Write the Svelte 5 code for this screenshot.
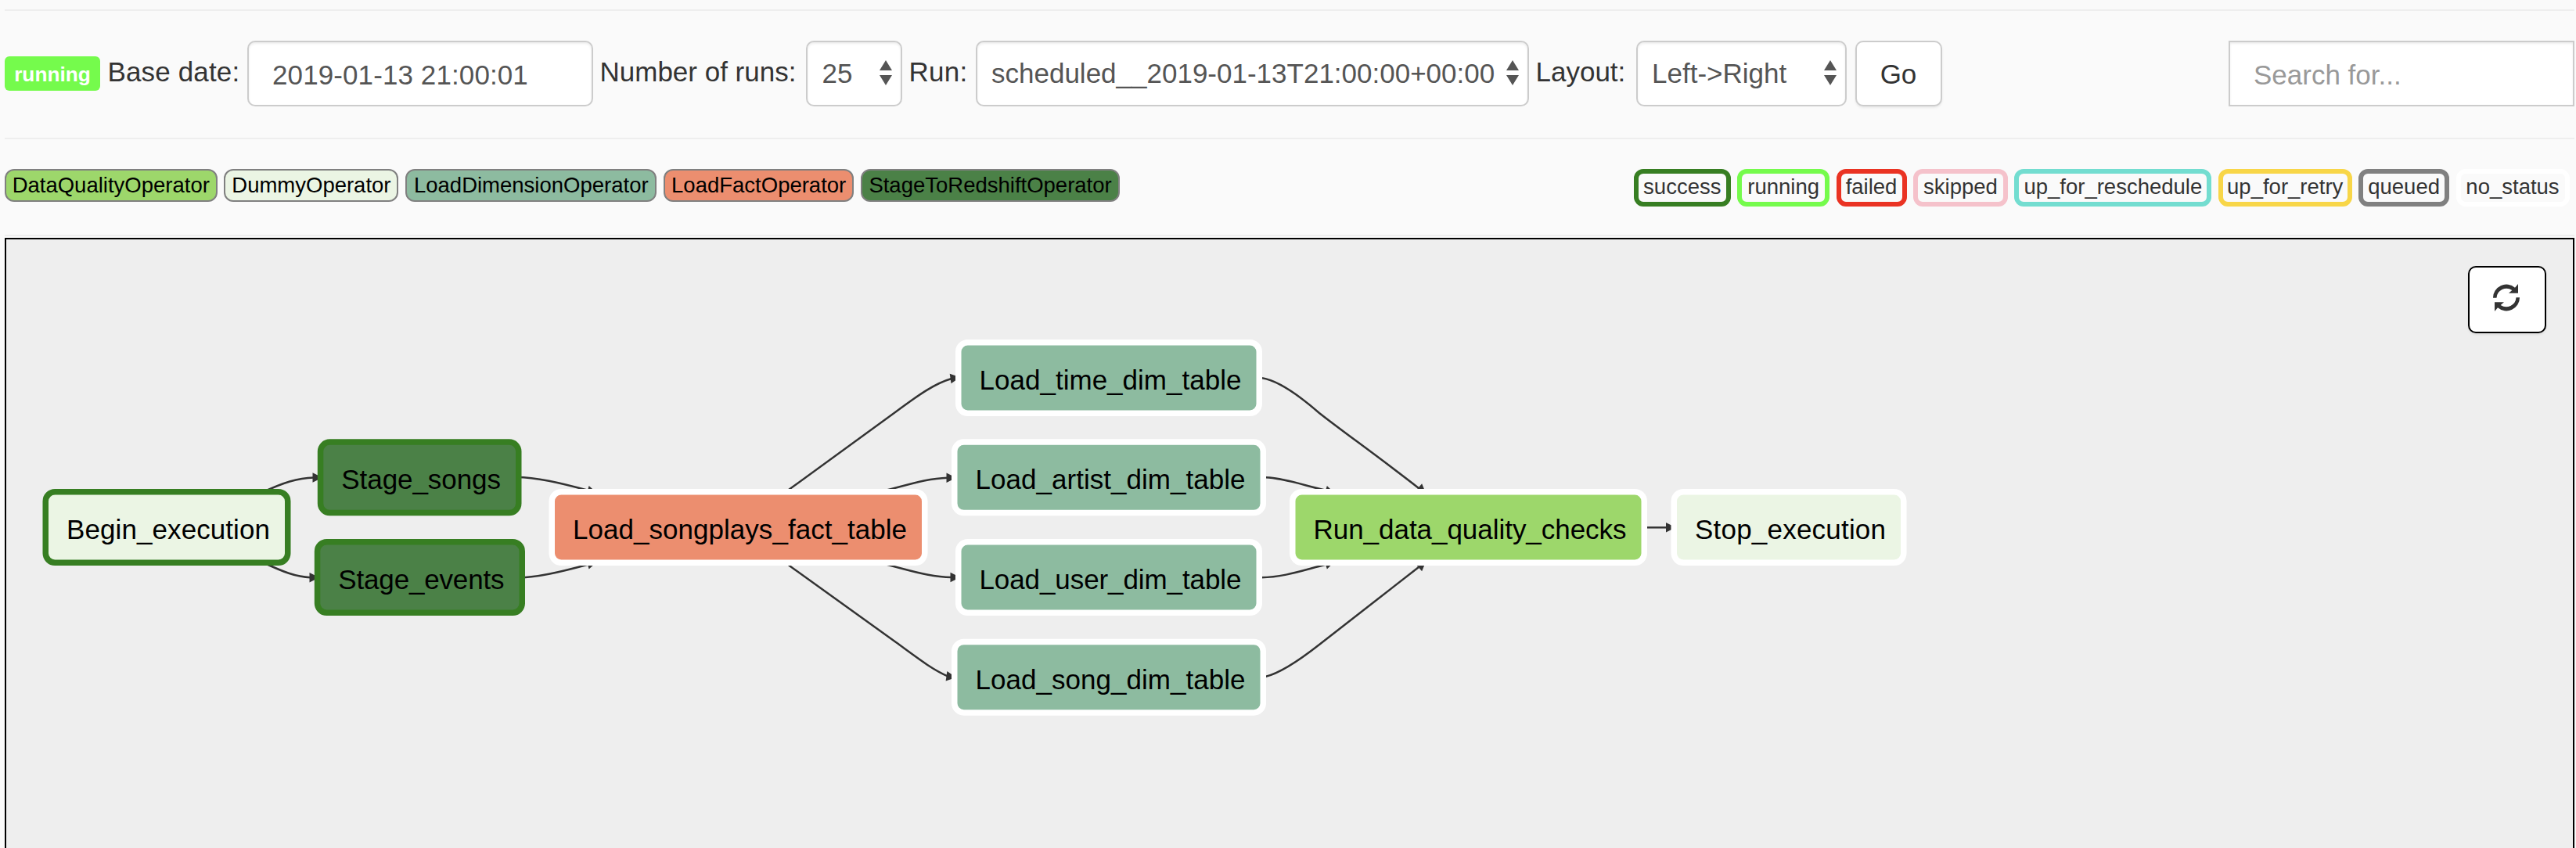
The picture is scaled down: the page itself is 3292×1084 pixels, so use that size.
<script>
  const operators = [
    { name: 'DataQualityOperator', cls: 'quality', w: 271.5 },
    { name: 'DummyOperator', cls: 'dummy', w: 223 },
    { name: 'LoadDimensionOperator', cls: 'dimension', w: 321 },
    { name: 'LoadFactOperator', cls: 'fact', w: 243 },
    { name: 'StageToRedshiftOperator', cls: 'stage', w: 331 },
  ];
  const states = [
    { name: 'success', w: 124 },
    { name: 'running', w: 118 },
    { name: 'failed', w: 90 },
    { name: 'skipped', w: 121 },
    { name: 'up_for_reschedule', w: 252 },
    { name: 'up_for_retry', w: 171 },
    { name: 'queued', w: 116 },
    { name: 'no_status', w: 145 },
  ];
  // Outer left/right edges and top of each task box; every box is 98 high.
  const nodes = [
    { id: 'Begin_execution', x1: 54.5, x2: 371.5, y: 625, op: 'dummy', state: 'success' },
    { id: 'Stage_songs', x1: 405.8, x2: 666.5, y: 561.3, op: 'stage', state: 'success' },
    { id: 'Stage_events', x1: 401.8, x2: 671, y: 689, op: 'stage', state: 'success' },
    { id: 'Load_songplays_fact_table', x1: 701.5, x2: 1185.5, y: 625, op: 'fact', state: 'none' },
    { id: 'Load_time_dim_table', x1: 1221, x2: 1613, y: 434, op: 'dimension', state: 'none' },
    { id: 'Load_artist_dim_table', x1: 1216, x2: 1618, y: 561.3, op: 'dimension', state: 'none' },
    { id: 'Load_user_dim_table', x1: 1221, x2: 1613, y: 689, op: 'dimension', state: 'none' },
    { id: 'Load_song_dim_table', x1: 1216, x2: 1618, y: 816.7, op: 'dimension', state: 'none' },
    { id: 'Run_data_quality_checks', x1: 1648, x2: 2105, y: 625, op: 'quality', state: 'none' },
    { id: 'Stop_execution', x1: 2135.5, x2: 2436.5, y: 625, op: 'dummy', state: 'none' },
  ];
  // Each edge: curve, then arrowhead base centre and angle.
  const edges = [
    { d: 'M335 629.5C362 617 380 611 401 610.5', x: 399.5, y: 610.5, a: 0 },
    { d: 'M335 718.5C362 731 378 737.5 397 738.2', x: 395.5, y: 738.2, a: 0 },
    { d: 'M660 610C685 610 715 617 752 627', x: 751, y: 627, a: 15 },
    { d: 'M660 738.5C685 738.5 715 731.5 752 721.5', x: 751, y: 721.5, a: -15 },
    { d: 'M1008 626L1144 527C1175 504 1195 490 1216 484', x: 1214.6, y: 484, a: -8 },
    { d: 'M1128 628C1160 620 1184 611.5 1211 610.7', x: 1209.5, y: 610.7, a: 0 },
    { d: 'M1128 720.5C1160 728 1188 738 1216 738', x: 1214.5, y: 738, a: 0 },
    { d: 'M1008 722.5L1145 821C1178 845 1192 856 1211 864.3', x: 1209.5, y: 864.3, a: 8 },
    { d: 'M1613 483.3C1630 486 1655 501 1686 528C1715 551 1762 584 1813 624', x: 1813, y: 623, a: 41 },
    { d: 'M1617 610.3C1640 611 1665 620 1695 627', x: 1694, y: 627, a: 17 },
    { d: 'M1612 738.2C1640 738 1665 729 1695 721.5', x: 1694, y: 721.5, a: -17 },
    { d: 'M1617 865C1634 861 1658 846 1686 824C1715 801 1762 765 1813 725', x: 1813, y: 725.5, a: -41 },
    { d: 'M2104 674.3H2131', x: 2129, y: 674.3, a: 0 },
  ];
  const arrow = 'M0 53A51 51 0 0 1 84 14L96 0V35H60L73 24A38 38 0 0 0 13.500 53Z';
</script>

{#snippet sorter()}
  <svg class="sorter" viewBox="0 0 16 32"><path d="M8 0L16 13H0ZM0 19H16L8 32Z" /></svg>
{/snippet}

<main>
  <form class="controls">
    <span class="badge">running</span>
    <label class="base">Base date:</label>
    <div class="field date">2019-01-13 21:00:01</div>
    <label class="count">Number of runs:</label>
    <div class="field select runs"><span>25</span>{@render sorter()}</div>
    <label class="run">Run:</label>
    <div class="field select run-id"><span>scheduled__2019-01-13T21:00:00+00:00</span>{@render sorter()}</div>
    <label class="layout">Layout:</label>
    <div class="field select direction"><span>Left-&gt;Right</span>{@render sorter()}</div>
    <button class="go" type="button">Go</button>
    <div class="field search">Search for...</div>
  </form>

  <section class="legend">
    <div class="operators">
      {#each operators as op}
        <span class="op {op.cls}" style:width="{op.w}px">{op.name}</span>
      {/each}
    </div>
    <div class="states">
      {#each states as state}
        <span class="state {state.name}" style:width="{state.w}px">{state.name}</span>
      {/each}
    </div>
  </section>

  <section class="graph">
    <svg class="dag" viewBox="8 306 3280 778">
      {#each edges as edge}
        <path class="edge" d={edge.d} />
        <path class="head" d="M0 -6.3L12.5 0L0 6.3Z" transform="translate({edge.x} {edge.y}) rotate({edge.a})" />
      {/each}
      {#each nodes as node}
        <rect
          class="node {node.op} {node.state}"
          x={node.x1 + 3.75}
          y={node.y + 3.75}
          width={node.x2 - node.x1 - 7.5}
          height="90.5"
          rx="12"
        />
        <text
          x={node.x1 + 30.5}
          y={node.y + 64}
          textLength={node.x2 - node.x1 - 57}>{node.id}</text>
      {/each}
    </svg>
    <button class="refresh" type="button" aria-label="Refresh">
      <svg viewBox="0 0 102 105">
        <path d={arrow} />
        <path d={arrow} transform="rotate(180 51 52.5)" />
      </svg>
    </button>
  </section>
</main>

<style>
  :global(body) {
    margin: 0;
    background: #fafafa;
  }
  main {
    box-sizing: border-box;
    width: 3292px;
    height: 1084px;
    padding: 12px 2px 0 6px;
    overflow: hidden;
    display: flex;
    flex-direction: column;
    font: 35px/50px 'Liberation Sans', Arial, sans-serif;
    color: #333;
    white-space: nowrap;
  }
  .controls {
    box-sizing: border-box;
    height: 164px;
    border-top: 2px solid #eee;
    padding-top: 38px;
    display: flex;
    align-items: flex-start;
  }
  .badge {
    box-sizing: border-box;
    width: 122px;
    height: 44px;
    margin-top: 20px;
    border-radius: 6px;
    background: #75fb4c;
    color: #fff;
    font-size: 26.25px;
    font-weight: bold;
    line-height: 46px;
    text-align: center;
  }
  label {
    box-sizing: border-box;
    padding-top: 15px;
  }
  .base { width: 188px; padding-left: 9.5px; letter-spacing: 0.15px; }
  .count { width: 272px; padding-left: 8.5px; }
  .run { width: 93.5px; padding-left: 8.5px; letter-spacing: 0.3px; }
  .layout { width: 137px; padding-left: 9px; }
  .field {
    box-sizing: border-box;
    height: 84px;
    padding: 17px 0 0 30px;
    border: 2px solid #ccc;
    border-radius: 10px;
    background: #fff;
    box-shadow: inset 0 2px 3px rgba(0, 0, 0, 0.075);
    color: #555;
  }
  .date { width: 442px; letter-spacing: 0.1px; }
  .select {
    display: flex;
    justify-content: space-between;
    padding: 15px 11px 0 18.5px;
  }
  .runs { width: 123px; }
  .run-id { width: 707px; }
  .direction { width: 269px; }
  .sorter {
    width: 16px;
    height: 32px;
    margin-top: 8px;
    fill: #555;
  }
  .go {
    box-sizing: border-box;
    width: 111px;
    height: 84px;
    margin-left: 11px;
    padding: 2px 0 0;
    border: 2px solid #ccc;
    border-radius: 10px;
    background: #fff;
    box-shadow: 0 2px 3px rgba(0, 0, 0, 0.07);
    color: #333;
    font: inherit;
  }
  .search {
    width: 442px;
    margin-left: auto;
    border-radius: 0;
    color: #999;
  }
  .legend {
    box-sizing: border-box;
    height: 126px;
    padding: 38px 0 0;
    border-top: 2px solid #eee;
    border-bottom: 2px solid #eee;
    display: flex;
    justify-content: space-between;
    align-items: flex-start;
    font-size: 27.5px;
  }
  .operators { display: flex; gap: 8.9px; }
  .op {
    box-sizing: border-box;
    height: 42px;
    border: 2px solid #808080;
    border-radius: 12px;
    color: #000;
    line-height: 37px;
    text-align: center;
  }
  .op.quality { background: #9dd76b; }
  .op.dummy { background: #ebf5e4; }
  .op.dimension { background: #8dbba0; }
  .op.fact { background: #ec8e6f; }
  .op.stage { background: #4b8147; }
  .states {
    display: flex;
    gap: 8.4px;
    padding-right: 6.500px;
  }
  .state {
    box-sizing: border-box;
    height: 48px;
    border: 6px solid #fff;
    border-radius: 12px;
    line-height: 33px;
    display: flex;
    justify-content: center;
  }
  .state.success { border-color: #377e22; }
  .state.running { border-color: #75fb4c; }
  .state.failed { border-color: #ea3323; }
  .state.skipped { border-color: #f5c2cb; }
  .state.up_for_reschedule { border-color: #73ddd0; }
  .state.up_for_retry { border-color: #f8d648; }
  .state.queued { border-color: #808080; }
  .graph {
    position: relative;
    box-sizing: border-box;
    margin-top: 2px;
    height: 780px;
    border: 2px solid #000;
    border-bottom: 0;
    background: #eee;
  }
  .dag {
    display: block;
    width: 3280px;
    height: 778px;
  }
  .edge {
    fill: none;
    stroke: #333;
    stroke-width: 2.5;
  }
  .head { fill: #333; }
  .node {
    stroke: #fff;
    stroke-width: 7.5;
  }
  .node.success { stroke: #377e22; }
  .node.quality { fill: #9dd76b; }
  .node.dummy { fill: #ebf5e4; }
  .node.dimension { fill: #8dbba0; }
  .node.fact { fill: #ec8e6f; }
  .node.stage { fill: #4b8147; }
  .dag text { fill: #000; }
  .refresh {
    position: absolute;
    top: 34px;
    right: 34px;
    box-sizing: border-box;
    width: 100px;
    height: 86px;
    padding: 0 2px 5px 0;
    border: 2px solid #000;
    border-radius: 10px;
    background: #fff;
    box-shadow: 0 2px 3px rgba(0, 0, 0, 0.07);
    display: flex;
    align-items: center;
    justify-content: center;
  }
  .refresh svg {
    width: 34px;
    height: 35px;
    fill: #333;
  }
</style>
